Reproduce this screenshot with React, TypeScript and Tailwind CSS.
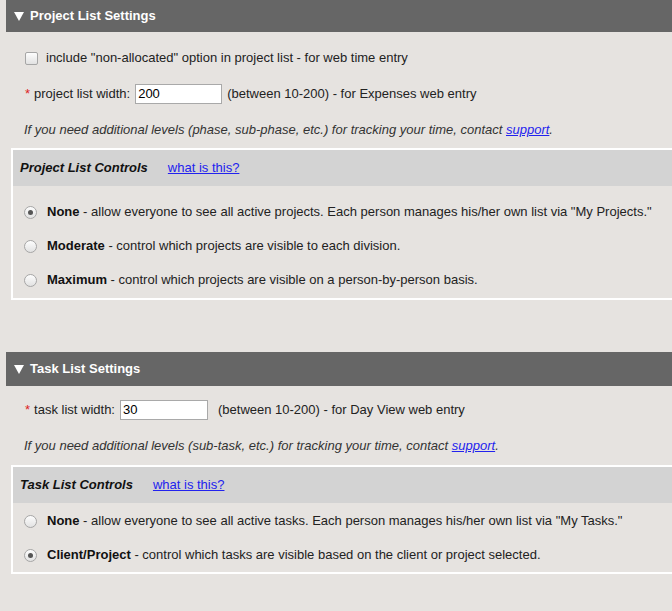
import React from 'react';

function Triangle() {
  return (
    <svg width="10" height="9" viewBox="0 0 10 9" className="mr-[6px]">
      <polygon points="0,0 10,0 5,9" fill="#ffffff" />
    </svg>
  );
}

function SectionHeader({ title, tall }: { title: string; tall?: boolean }) {
  return (
    <div
      className={
        'ml-[6px] flex items-center bg-[#666666] pl-[8px] text-[13px] font-bold text-white ' +
        (tall ? 'h-[34px]' : 'h-[32px]')
      }
    >
      <Triangle />
      {title}
    </div>
  );
}

function Radio({ checked }: { checked?: boolean }) {
  return (
    <span className="flex h-[13px] w-[13px] shrink-0 items-center justify-center rounded-full border border-[#a6a6a6] bg-gradient-to-b from-[#fdfdfd] to-[#e2e2e2]">
      {checked && <span className="h-[5px] w-[5px] rounded-full bg-[#555555]" />}
    </span>
  );
}

function Checkbox() {
  return (
    <span className="h-[13px] w-[13px] shrink-0 rounded-[2px] border border-[#a6a6a6] bg-gradient-to-b from-[#fdfdfd] to-[#e2e2e2]" />
  );
}

function WidthInput({ value, className }: { value: string; className: string }) {
  return (
    <span
      className={
        'flex h-[20px] items-center border border-[#a9a9a9] bg-white pl-[2px] text-[13px] text-black ' +
        className
      }
    >
      {value}
    </span>
  );
}

function Support() {
  return <span className="text-[#2222ee] underline">support</span>;
}

type Option = { label: string; desc: string; checked?: boolean };

function Controls({
  title,
  options,
  pad,
}: {
  title: string;
  options: Option[];
  pad: string;
}) {
  return (
    <div className="ml-[11px] border-y-2 border-l-2 border-white">
      <div className="flex h-[36px] items-center bg-[#d3d3d3] pl-[7px] text-[13px]">
        <span className="font-bold italic text-[#111]">{title}</span>
        <span className="ml-[20px] text-[#2222ee] underline">what is this?</span>
      </div>
      <div className={pad}>
        {options.map((o, i) => (
          <div key={i} className="flex h-[34px] items-center pl-[11px]">
            <Radio checked={o.checked} />
            <span className="ml-[10px] text-[13px] text-[#222]">
              <b className="text-[#111]">{o.label}</b> - {o.desc}
            </span>
          </div>
        ))}
      </div>
    </div>
  );
}

export default function App() {
  return (
    <div className="min-h-[611px] w-[672px] overflow-hidden bg-[#e6e3e0] font-['Liberation_Sans',Arial,sans-serif] text-[13px] text-[#222]">
      {/* Project list */}
      <SectionHeader title="Project List Settings" />
      <div className="pt-[8px]">
        <div className="flex h-[36px] items-center pl-[25px]">
          <Checkbox />
          <span className="ml-[8px]">include "non-allocated" option in project list - for web time entry</span>
        </div>
        <div className="flex h-[36px] items-center pl-[25px]">
          <span className="mr-[4px] text-[#dd2222]">*</span>
          <span>project list width:</span>
          <WidthInput value="200" className="ml-[5px] w-[87px]" />
          <span className="ml-[5px]">(between 10-200) - for Expenses web entry</span>
        </div>
        <div className="flex h-[36px] items-center pl-[24px] italic text-[#333]">
          <span>
            If you need additional levels (phase, sub-phase, etc.) for tracking your time, contact <Support />.
          </span>
        </div>
      </div>
      <Controls
        title="Project List Controls"
        pad="pt-[9px] pb-[1px]"
        options={[
          {
            label: 'None',
            desc: 'allow everyone to see all active projects. Each person manages his/her own list via "My Projects."',
            checked: true,
          },
          { label: 'Moderate', desc: 'control which projects are visible to each division.' },
          { label: 'Maximum', desc: 'control which projects are visible on a person-by-person basis.' },
        ]}
      />

      <div className="h-[52px]" />

      {/* Task list */}
      <SectionHeader title="Task List Settings" tall />
      <div className="pt-[6px]">
        <div className="flex h-[36px] items-center pl-[25px]">
          <span className="mr-[4px] text-[#dd2222]">*</span>
          <span>task list width:</span>
          <WidthInput value="30" className="ml-[5px] w-[88px]" />
          <span className="ml-[10px]">(between 10-200) - for Day View web entry</span>
        </div>
        <div className="flex h-[36px] items-center pl-[24px] italic text-[#333]">
          <span>
            If you need additional levels (sub-task, etc.) for tracking your time, contact <Support />.
          </span>
        </div>
      </div>
      <div className="mt-[1px]">
        <Controls
          title="Task List Controls"
          pad="pt-[1px]"
          options={[
            {
              label: 'None',
              desc: 'allow everyone to see all active tasks. Each person manages his/her own list via "My Tasks."',
            },
            {
              label: 'Client/Project',
              desc: 'control which tasks are visible based on the client or project selected.',
              checked: true,
            },
          ]}
        />
      </div>
    </div>
  );
}
